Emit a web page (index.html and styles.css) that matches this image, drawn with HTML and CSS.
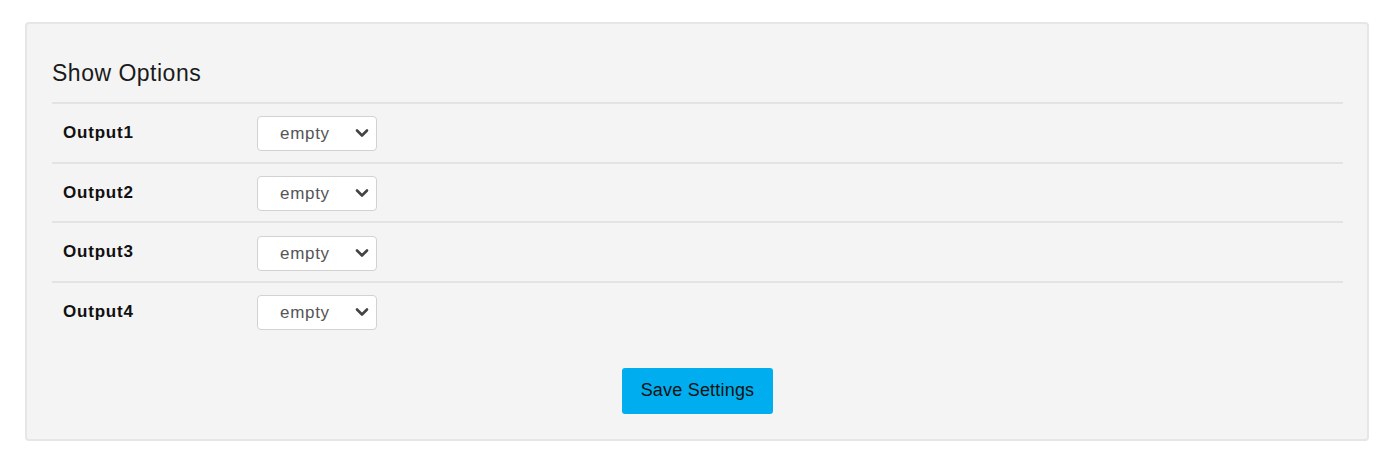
FILE: index.html
```html
<!DOCTYPE html>
<html lang="en">
<head>
  <meta charset="UTF-8" />
  <title>Show Options</title>
  <link rel="stylesheet" href="styles.css">
</head>
<body>
  <div class="panel">
    <h2 class="heading">Show Options</h2>
    <div class="rows">
      <div class="row">
        <div class="label">Output1</div>
        <span class="select-wrap">
          <select class="select"><option>empty</option></select>
          <svg class="chevron" width="14" height="10" viewBox="0 0 14 10"><path d="M2 2.5 L7 7.5 L12 2.5" fill="none" stroke="#444" stroke-width="2.6" stroke-linecap="round" stroke-linejoin="round"/></svg>
        </span>
      </div>
      <div class="row">
        <div class="label">Output2</div>
        <span class="select-wrap">
          <select class="select"><option>empty</option></select>
          <svg class="chevron" width="14" height="10" viewBox="0 0 14 10"><path d="M2 2.5 L7 7.5 L12 2.5" fill="none" stroke="#444" stroke-width="2.6" stroke-linecap="round" stroke-linejoin="round"/></svg>
        </span>
      </div>
      <div class="row">
        <div class="label">Output3</div>
        <span class="select-wrap">
          <select class="select"><option>empty</option></select>
          <svg class="chevron" width="14" height="10" viewBox="0 0 14 10"><path d="M2 2.5 L7 7.5 L12 2.5" fill="none" stroke="#444" stroke-width="2.6" stroke-linecap="round" stroke-linejoin="round"/></svg>
        </span>
      </div>
      <div class="row">
        <div class="label">Output4</div>
        <span class="select-wrap">
          <select class="select"><option>empty</option></select>
          <svg class="chevron" width="14" height="10" viewBox="0 0 14 10"><path d="M2 2.5 L7 7.5 L12 2.5" fill="none" stroke="#444" stroke-width="2.6" stroke-linecap="round" stroke-linejoin="round"/></svg>
        </span>
      </div>
    </div>
    <div class="actions">
      <button class="save" type="button">Save Settings</button>
    </div>
  </div>
</body>
</html>
```
FILE: styles.css
```css
body {
  margin: 0;
  padding: 22px 23px 0 25px;
  font-family: "Liberation Sans", Arial, sans-serif;
  background: #fff;
  color: #111;
}
.panel {
  background: #f4f4f4;
  border: 2px solid #e6e6e6;
  border-radius: 4px;
  padding: 0 24px 25px 25px;
  height: 419px;
  box-sizing: border-box;
}
.heading {
  margin: 0;
  padding-top: 34px;
  height: 78px;
  box-sizing: border-box;
  font-size: 23px;
  font-weight: normal;
  letter-spacing: 0.5px;
  color: #1a1a1a;
  line-height: 30px;
}
.rows {
  display: flex;
  flex-direction: column;
}
.row {
  display: flex;
  align-items: center;
  height: 59.7px;
  border-top: 2px solid #e3e3e3;
  box-sizing: border-box;
  padding-left: 11px;
}
.label {
  width: 194px;
  font-size: 17px;
  font-weight: bold;
  letter-spacing: 0.8px;
  color: #111;
}
.select-wrap {
  position: relative;
  display: inline-block;
  margin-top: 2px;
}
.select {
  appearance: none;
  -webkit-appearance: none;
  width: 120px;
  height: 35px;
  border: 1px solid #d2d2d2;
  border-radius: 4px;
  background: #fff;
  padding: 0 0 0 22px;
  font-family: "Liberation Sans", Arial, sans-serif;
  font-size: 17px;
  letter-spacing: 0.7px;
  color: #555;
}
.chevron {
  position: absolute;
  right: 8px;
  top: 12px;
  pointer-events: none;
}
.actions {
  display: flex;
  justify-content: center;
  padding-top: 27px;
}
.save {
  width: 151px;
  height: 46px;
  border: none;
  border-radius: 3px;
  background: #00aeef;
  color: #111;
  font-family: "Liberation Sans", Arial, sans-serif;
  font-size: 18px;
  letter-spacing: 0.2px;
}
```
